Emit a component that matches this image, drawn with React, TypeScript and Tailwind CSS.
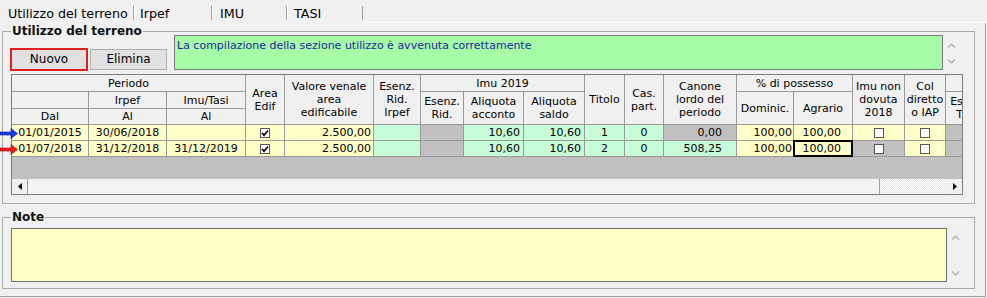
import React from "react";

type Cell = {
  t?: string;
  bg: string;
  align?: string;
  check?: boolean;
  box?: boolean;
  sel?: boolean;
};

const Y = "bg-[#ffffc8]";
const G = "bg-[#c8fcd8]";
const S = "bg-[#c0c0c0]";

const rows: Cell[][] = [
  [
    { t: "01/01/2015", bg: Y },
    { t: "30/06/2018", bg: Y },
    { t: "", bg: Y },
    { box: true, check: true, bg: Y },
    { t: "2.500,00", bg: Y, align: "justify-end pr-[2px]" },
    { t: "", bg: G },
    { t: "", bg: S },
    { t: "10,60", bg: G, align: "justify-end pr-[3px]" },
    { t: "10,60", bg: G, align: "justify-end pr-[3px]" },
    { t: "1", bg: G },
    { t: "0", bg: G },
    { t: "0,00", bg: S, align: "justify-end pr-[14px]" },
    { t: "100,00", bg: Y, align: "justify-end pr-[1px]" },
    { t: "100,00", bg: Y, align: "justify-end pr-[11px]" },
    { box: true, bg: Y },
    { box: true, bg: Y },
    { t: "", bg: S },
  ],
  [
    { t: "01/07/2018", bg: Y },
    { t: "31/12/2018", bg: Y },
    { t: "31/12/2019", bg: Y },
    { box: true, check: true, bg: Y },
    { t: "2.500,00", bg: Y, align: "justify-end pr-[2px]" },
    { t: "", bg: G },
    { t: "", bg: S },
    { t: "10,60", bg: G, align: "justify-end pr-[3px]" },
    { t: "10,60", bg: G, align: "justify-end pr-[3px]" },
    { t: "2", bg: G },
    { t: "0", bg: G },
    { t: "508,25", bg: G, align: "justify-end pr-[14px]" },
    { t: "100,00", bg: Y, align: "justify-end pr-[1px]" },
    { t: "100,00", bg: Y, align: "justify-end pr-[11px]", sel: true },
    { box: true, bg: S },
    { box: true, bg: Y },
    { t: "", bg: S },
  ],
];

function Chevron({ up }: { up?: boolean }) {
  return (
    <svg width="9" height="5" viewBox="0 0 9 5">
      <polyline
        points={up ? "1,4.5 4.5,1 8,4.5" : "1,0.5 4.5,4 8,0.5"}
        fill="none"
        stroke="#ababab"
        strokeWidth="1.2"
      />
    </svg>
  );
}

function CheckBox({ checked }: { checked?: boolean }) {
  return (
    <span className="flex h-[10px] w-[10px] items-center justify-center border border-[#555] bg-white">
      {checked && (
        <svg width="8" height="8" viewBox="0 0 8 8">
          <polyline points="1,4 3,6.2 7,1.5" fill="none" stroke="#000" strokeWidth="1.7" />
        </svg>
      )}
    </span>
  );
}

function Pointer({ fill, edge }: { fill: string; edge: string }) {
  return (
    <svg width="18" height="11" viewBox="0 0 18 11">
      <path d="M0 4h11V0.5L17.5 5.5L11 10.5V7H0z" fill={fill} stroke={edge} strokeWidth="0.6" />
    </svg>
  );
}

function H({ children, span = "" }: { children?: React.ReactNode; span?: string }) {
  return (
    <div
      className={`flex items-center justify-center whitespace-pre-line bg-[#f0f0f0] text-center leading-[13px] ${span}`}
    >
      {children}
    </div>
  );
}

function Tab({ label, w, pl, first }: { label: string; w: string; pl: string; first?: boolean }) {
  return (
    <div className={`flex h-[14px] items-center border-r border-[#a0a0a0] ${first ? "" : "border-l border-l-white"} ${w} ${pl}`}>
      <span className="whitespace-nowrap leading-[15px]">{label}</span>
    </div>
  );
}

export default function App() {
  return (
    <div className="h-[298px] w-[987px] overflow-hidden bg-[#f0f0f0] font-['DejaVu_Sans',sans-serif] text-black">
      {/* tab strip */}
      <div className="flex h-[23px] text-[12.7px]">
        <div className="flex pt-[6px]">
          <Tab label="Utilizzo del terreno" w="w-[134px]" pl="pl-[8px]" first />
          <Tab label="Irpef" w="w-[78px]" pl="pl-[5px]" />
          <Tab label="IMU" w="w-[75px]" pl="pl-[7px]" />
          <Tab label="TASI" w="w-[76px]" pl="pl-[6px]" />
        </div>
        <div className="flex-1 border-b border-white" />
      </div>

      {/* tab page */}
      <div className="h-[274px] w-[986px] border-r border-b border-[#a0a0a0] pl-[2px] pt-px">
        <fieldset className="w-[973px] border border-[#a9a9a9] pb-[8px] pl-[7px]">
          <legend className="ml-px px-px text-[12px] font-bold leading-[14px] text-[#111]">
            Utilizzo del terreno
          </legend>

          <div className="-mt-[3px] flex">
            <div className="mt-[13px] flex items-start gap-[2px] text-[12px]">
              <button className="h-[23px] w-[78px] border-2 border-[#e11d1d] bg-[#e1e1e1] leading-[15px]">
                Nuovo
              </button>
              <button className="mt-px h-[21px] w-[77px] border border-[#adadad] bg-[#e1e1e1] leading-[15px]">
                Elimina
              </button>
            </div>
            <div className="ml-[7px] flex h-[35px]">
              <div className="w-[769px] border border-[#7a7a7a] bg-[#a6fba6] px-[2px] pt-[3px] text-[11px] leading-[13px] text-[#1c2a9c]">
                La compilazione della sezione utilizzo è avvenuta correttamente
              </div>
              <div className="flex w-[17px] flex-col items-center justify-between pt-[8px] pb-[6px]">
                <Chevron up />
                <Chevron />
              </div>
            </div>
          </div>

          {/* grid */}
          <div className="relative ml-px mt-[3px] w-[952px] border border-[#7d7d7d] text-[11px]">
            <div className="h-[104px] overflow-hidden bg-[#c0c0c0]">
              <div className="grid w-max grid-cols-[76px_77px_78px_38px_88px_46px_42px_59px_60px_39px_38px_72px_56px_58px_51px_40px_44px] grid-rows-[16px_16px_15px_15px_15px] gap-px bg-[#999] pb-px">
                <H span="col-span-3">Periodo</H>
                <H span="row-span-3">{"Area\nEdif"}</H>
                <H span="row-span-3">{"Valore venale\narea\nedificabile"}</H>
                <H span="row-span-3">{"Esenz.\nRid.\nIrpef"}</H>
                <H span="col-span-3">Imu 2019</H>
                <H span="row-span-3">Titolo</H>
                <H span="row-span-3">{"Cas.\npart."}</H>
                <H span="row-span-3">{"Canone\nlordo del\nperiodo"}</H>
                <H span="col-span-2">% di possesso</H>
                <H span="row-span-3">{"Imu non\ndovuta\n2018"}</H>
                <H span="row-span-3">{"Col\ndiretto\no IAP"}</H>
                <H />

                <H />
                <H>Irpef</H>
                <H>Imu/Tasi</H>
                <H span="row-span-2">{"Esenz.\nRid."}</H>
                <H span="row-span-2">{"Aliquota\nacconto"}</H>
                <H span="row-span-2">{"Aliquota\nsaldo"}</H>
                <H span="row-span-2">Dominic.</H>
                <H span="row-span-2">Agrario</H>
                <H span="row-span-2">{"Esenz.\nTASI"}</H>

                <H>Dal</H>
                <H>Al</H>
                <H>Al</H>

                {rows.map((r, i) =>
                  r.map((c, j) => (
                    <div
                      key={`${i}-${j}`}
                      className={`flex items-center leading-[15px] ${c.bg} ${c.align ?? "justify-center"} ${
                        c.sel ? "relative z-10 shadow-[inset_0_0_0_1px_#000] outline outline-1 outline-black" : ""
                      }`}
                    >
                      {c.box ? <CheckBox checked={c.check} /> : c.t}
                    </div>
                  ))
                )}
              </div>
            </div>

            {/* horizontal scrollbar */}
            <div className="flex h-[15px] bg-[#f0f0f0]">
              <div className="flex w-[16px] items-center justify-center border-r border-[#a0a0a0]">
                <svg width="4" height="7" viewBox="0 0 4 7">
                  <path d="M4 0v7L0 3.5z" fill="#000" />
                </svg>
              </div>
              <div className="flex-1 border-r border-[#a0a0a0] bg-[#f3f3f3]" />
              <div className="w-[67px] bg-[repeating-conic-gradient(#ffffff_0_25%,#e4e4e4_0_50%)] bg-[length:2px_2px]" />
              <div className="flex w-[15px] items-center justify-center">
                <svg width="4" height="7" viewBox="0 0 4 7">
                  <path d="M0 0v7L4 3.5z" fill="#000" />
                </svg>
              </div>
            </div>

            {/* row pointers */}
            <div className="absolute left-[-12px] top-[53px]">
              <Pointer fill="#1638f2" edge="#0a1f9a" />
            </div>
            <div className="absolute left-[-12px] top-[69px]">
              <Pointer fill="#ee1b1b" edge="#9a0a0a" />
            </div>
          </div>
        </fieldset>

        <fieldset className="mt-[6px] w-[973px] border border-[#a9a9a9] pb-[6px] pl-[7px]">
          <legend className="ml-px px-px text-[12px] font-bold leading-[14px] text-[#111]">Note</legend>
          <div className="ml-px mt-[4px] flex">
            <div className="h-[54px] w-[936px] border border-[#6f6f6f] bg-[#ffffc4]" />
            <div className="flex w-[17px] flex-col items-center justify-between pt-[7px] pb-[6px]">
              <Chevron up />
              <Chevron />
            </div>
          </div>
        </fieldset>
      </div>
    </div>
  );
}
